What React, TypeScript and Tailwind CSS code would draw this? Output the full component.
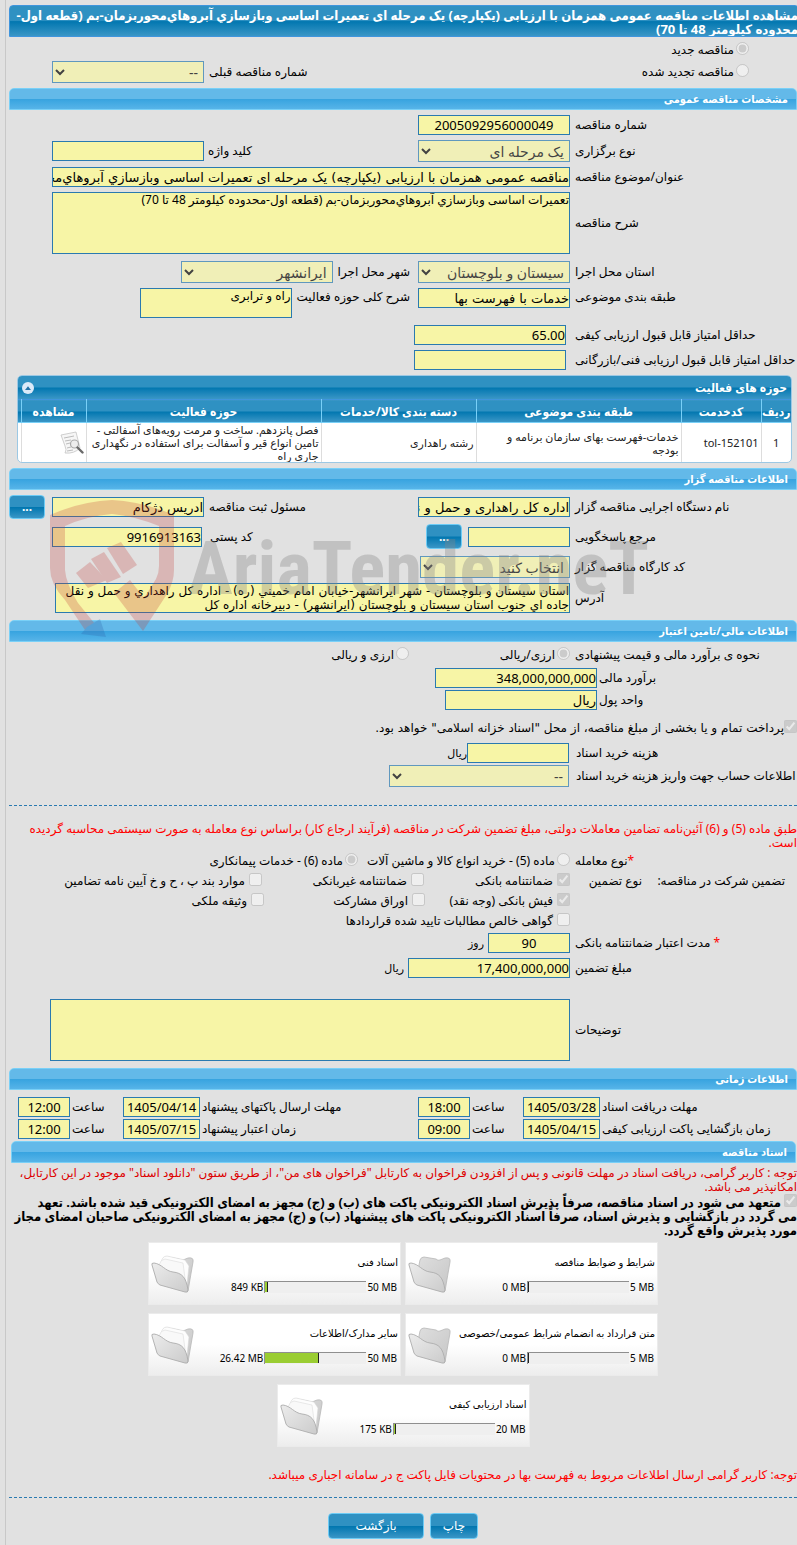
import React from "react";

const inputBase =
  "block shrink-0 rounded-none border border-[#2a7ab0] bg-[#f7f5a6] p-0 text-black text-[13px] leading-[18px] outline-none";

const boldFace = "font-['Noto_Sans','DejaVu_Sans_Condensed','DejaVu_Sans',sans-serif] font-bold";

type FieldProps = { id: string; value?: string; className?: string };

function TextBox({ id, value = "", className = "w-[152px]" }: FieldProps) {
  const face = /^[\d.,:/]*$/.test(value) ? "" : "font-['DejaVu_Sans',sans-serif]";
  return (
    <input id={id} type="text" readOnly defaultValue={value} className={`${inputBase} h-5 ${face} ${className}`} />
  );
}

function Area({ id, value = "", className = "" }: FieldProps) {
  return (
    <textarea
      id={id}
      readOnly
      defaultValue={value}
      className={`${inputBase} resize-none overflow-hidden !text-[12px] !leading-[14px] ${className}`}
    />
  );
}

function Drop({ id, value = "", className = "w-[152px]" }: FieldProps) {
  return (
    <select
      id={id}
      disabled
      defaultValue={value}
      className={`block h-[22px] shrink-0 rounded-none border border-[#2a7ab0] bg-[#f7f5a6] px-px text-[14px] text-black opacity-70 ${className}`}
    >
      <option value={value}>{value}</option>
    </select>
  );
}

function Lead({ id, children, className = "w-[222px] me-[5px]" }: { id?: string; children: React.ReactNode; className?: string }) {
  return (
    <label htmlFor={id} className={`block shrink-0 text-left whitespace-nowrap ${className}`}>
      {children}
    </label>
  );
}

function Pick({
  type,
  name,
  on = false,
  children,
  className = "",
}: {
  type: "radio" | "checkbox";
  name: string;
  on?: boolean;
  children: React.ReactNode;
  className?: string;
}) {
  return (
    <label className={`flex shrink-0 items-center whitespace-nowrap ${type === "radio" ? "gap-[2px]" : "gap-1"} ${className}`}>
      <input type={type} name={name} disabled defaultChecked={on} className="mb-1 h-[13px] w-[13px] shrink-0" />
      <span>{children}</span>
    </label>
  );
}

function Bar({ children, className = "" }: { children: React.ReactNode; className?: string }) {
  return (
    <h2
      className={`h-[22px] rounded-t-[5px] border border-[#79d0f7] bg-[linear-gradient(#63b9e9_0%,#63b9e9_48%,#38a4e0_52%,#57b4e8_100%)] px-2 text-[11px] leading-[20px] text-white ${boldFace} ${className}`}
    >
      {children}
    </h2>
  );
}

function Row({ children, className = "" }: { children: React.ReactNode; className?: string }) {
  return <div className={`flex items-center ${className}`}>{children}</div>;
}

const blueFill = "bg-[linear-gradient(#2f91c2_0%,#2f91c2_48%,#0277b0_52%,#3a96c6_100%)]";

function BlueButton({ children, className = "", label }: { children: React.ReactNode; className?: string; label?: string }) {
  return (
    <button
      type="button"
      aria-label={label}
      className={`shrink-0 rounded-[4px] border border-[#6ccbf5] text-white ${blueFill} ${className}`}
    >
      {children}
    </button>
  );
}

function Folder({ papers }: { papers: boolean }) {
  return (
    <svg viewBox="0 0 44 40" className="h-10 w-11" aria-hidden="true">
      <defs>
        <linearGradient id="folderBack" x1="0" y1="0" x2="1" y2="1">
          <stop offset="0" stopColor="#dedede" />
          <stop offset="1" stopColor="#c6c6c6" />
        </linearGradient>
        <linearGradient id="folderFront" x1="0" y1="0" x2="1" y2="1">
          <stop offset="0" stopColor="#ececec" />
          <stop offset="1" stopColor="#cbcbcb" />
        </linearGradient>
      </defs>
      <path d="M10 16L12 6Q13 3 16 3L28 5Q30 7 32 6L37 4Q43 3 42 8L37 37Q35 39 33 35Z" fill="url(#folderBack)" stroke="#b8b8b8" strokeWidth="0.8" />
      {papers && (
        <>
          <path d="M10 9Q11 2 16 2L34 6L38 12L36 31Z" fill="#fdfdfd" stroke="#d6d6d6" strokeWidth="0.6" />
          <path d="M8 11Q10 5 14 5L32 9L35 32Z" fill="#f9f9f9" stroke="#dcdcdc" strokeWidth="0.6" />
        </>
      )}
      <path d="M1 11Q0 9 3 9C11 10 14 17 22 18C31 19 35 23 37 36Q37 39 34 38L9 31Q7 30 6 28Z" fill="url(#folderFront)" stroke="#adadad" strokeWidth="0.9" />
    </svg>
  );
}

function FileCard({ title, max, used, fill, papers }: { title: string; max: string; used: string; fill: number; papers: boolean }) {
  return (
    <div className="flex h-[63px] w-[253px] items-center justify-between border border-[#ebebeb] bg-[linear-gradient(#ffffff_50%,#ededed_100%)] px-[2px]">
      <div className="flex flex-col gap-3">
        <span className="text-[10px] leading-[14px]">{title}</span>
        <div className="flex items-center text-[10px] leading-3">
          <span dir="ltr" className="px-px">{max}</span>
          <div dir="ltr" className="h-3 w-[102px] border-t border-l border-t-[#8f8f8f] border-l-[#8f8f8f] bg-[#efefef]">
            <div className="h-[10px] border-r border-[#222] bg-[#9acd32]" style={{ width: fill + 1 }} />
          </div>
          <span dir="ltr" className="px-px">{used}</span>
        </div>
      </div>
      <Folder papers={papers} />
    </div>
  );
}

function Watermark() {
  return (
    <div dir="ltr" aria-hidden="true" className="pointer-events-none absolute top-[5px] left-[41px] flex">
      <svg viewBox="0 0 126 138" className="h-[138px] w-[126px] shrink-0 opacity-25">
        <path
          d="M62 0Q91 1 124 15V70Q124 82 117 94L93 131L64 93L80 80L94 98L106 79Q109 73 109 66V26Q84 16 62 14Q37 16 15 26V70Q16 84 28 103L45 124L37 133L15 100Q0 84 0 68V15Q32 1 62 0Z"
          fill="#c23b35"
        />
        <path d="M26 73L40 62L57 80L38 88Z" fill="#c23b35" />
        <path d="M41 59L54 52L71 77L57 83Z" fill="#c23b35" />
        <path d="M57 48L71 42L87 65L73 74Z" fill="#c23b35" />
        <path d="M50 119L56 137L31 134L37 127Z" fill="#2f5fa8" />
      </svg>
      <span className="ml-[12px] pt-[16px] font-['Roboto_Condensed','Roboto',sans-serif] text-[75px] leading-[104px] font-bold text-[#888888]/35">
        AriaTender.neT
      </span>
    </div>
  );
}

const th = `border-l border-[#79d0f7] p-0 text-center text-[12px] whitespace-nowrap ${boldFace}`;
const td = "border-l border-[#dddddd] px-[2px] py-0";

function ActivityTable() {
  return (
    <div className="me-2 ms-[5px] mt-[5px] overflow-hidden rounded-[5px] border border-[#9cc8e4] bg-white">
      <div className={`flex h-[23px] items-center justify-between px-1 text-white ${blueFill}`}>
        <h3 className={`text-[12px] ${boldFace}`}>حوزه های فعالیت</h3>
        <button type="button" aria-label="بستن جدول" className="flex h-3 w-3 items-center justify-center rounded-full bg-[#dbe9f8]">
          <svg viewBox="0 0 8 5" className="h-[4px] w-[6px]" aria-hidden="true">
            <path d="M0 5L4 0L8 5Z" fill="#2272a8" />
          </svg>
        </button>
      </div>
      <table className="w-full table-fixed border-collapse text-[11px] leading-[13px] text-[#222222]">
        <colgroup>
          <col className="w-[30px]" />
          <col className="w-[80px]" />
          <col className="w-[205px]" />
          <col className="w-[155px]" />
          <col />
          <col className="w-[65px]" />
          <col className="w-[3px]" />
        </colgroup>
        <thead>
          <tr className={`h-[23px] border-y border-t-[#3f95dd] border-b-[#79d0f7] text-white ${blueFill}`}>
            <th className={th}>ردیف</th>
            <th className={th}>کدخدمت</th>
            <th className={th}>طبقه بندی موضوعی</th>
            <th className={th}>دسته بندی کالا/خدمات</th>
            <th className={th}>حوزه فعالیت</th>
            <th className={th}>مشاهده</th>
            <td />
          </tr>
        </thead>
        <tbody>
          <tr className="h-[39px]">
            <td className={`${td} text-center`}>1</td>
            <td className={td}><span dir="ltr">tol-152101</span></td>
            <td className={td}>خدمات-فهرست بهای سازمان برنامه و بودجه</td>
            <td className={td}>رشته راهداری</td>
            <td className={td}>فصل پانزدهم. ساخت و مرمت رویه‌های آسفالتی - تامین انواع قیر و آسفالت برای استفاده در نگهداری جاری راه</td>
            <td className={td}>
              <button type="button" aria-label="مشاهده" className="block">
                <svg viewBox="0 0 24 24" className="h-6 w-6" aria-hidden="true">
                  <path d="M1 4L16 1L20 17Q14 23 5 22Q7 19 5 15Z" fill="#f6f6f6" stroke="#c4c4c4" strokeWidth="0.8" />
                  <path d="M4 7L14 5M5 10L11 9M6 13L10 12M7 17L11 16M7 20L13 19" stroke="#bcbcbc" strokeWidth="1" />
                  <circle cx="14.500" cy="13" r="4" fill="#eeeeee" stroke="#aaaaaa" strokeWidth="1.200" />
                  <path d="M17.500 16.500L22.500 21.500" stroke="#6a6a6a" strokeWidth="2.400" strokeLinecap="round" />
                </svg>
              </button>
            </td>
            <td />
          </tr>
        </tbody>
      </table>
    </div>
  );
}

function DateTime({ id, label, date, time, className }: { id: string; label: string; date: string; time: string; className: string }) {
  return (
    <div className="flex items-center">
      <Lead id={`${id}-date`} className={`me-[2px] ${className}`}>{label}</Lead>
      <TextBox id={`${id}-date`} value={date} className="w-[77px] text-center" />
      <Lead id={`${id}-time`} className="w-[51px] me-[2px]">ساعت</Lead>
      <TextBox id={`${id}-time`} value={time} className="w-[52px] text-center" />
    </div>
  );
}

export default function App() {
  return (
    <div
      dir="rtl"
      lang="fa"
      className="min-h-screen overflow-hidden bg-[#e1e1e1] pl-[5px] font-['Noto_Sans','DejaVu_Sans',sans-serif] text-[12px] leading-[14px] text-black"
    >
      <main className="min-h-screen border-l border-[#c8c8c8] pt-[5px] pb-[5px] pl-[3px]">
        <h1
          className={`-ms-[2px] h-8 overflow-hidden rounded-t-[4px] border border-[#3f95dd] pt-[2px] text-[13px] leading-[14px] whitespace-nowrap text-white ${boldFace} ${blueFill}`}
        >
          مشاهده اطلاعات مناقصه عمومی همزمان با ارزیابی (یکپارچه) یک مرحله ای تعمیرات اساسی وبازسازي آبروهاي‌محوربزمان-بم (قطعه اول-
          <br />
          محدوده کیلومتر 48 تا 70)
        </h1>

        <Row className="mt-[3px] h-5 ps-12">
          <Pick type="radio" name="kind" on>مناقصه جدید</Pick>
        </Row>
        <Row className="mt-px h-[22px]">
          <Pick type="radio" name="kind" className="w-[379px] ps-12">مناقصه تجدید شده</Pick>
          <Lead id="prev" className="w-[209px] me-[5px]">شماره مناقصه قبلی</Lead>
          <Drop id="prev" value="--" />
        </Row>

        <Bar className="mt-[5px]">مشخصات مناقصه عمومی</Bar>
        <Row className="mt-[5px]">
          <Lead id="no">شماره مناقصه</Lead>
          <TextBox id="no" value="2005092956000049" className="w-[152px] text-center" />
        </Row>
        <Row className="mt-[5px]">
          <Lead id="how">نوع برگزاری</Lead>
          <Drop id="how" value="یک مرحله ای" />
          <Lead id="key" className="w-[210px] me-1">کلید واژه</Lead>
          <TextBox id="key" />
        </Row>
        <Row className="mt-[5px]">
          <Lead id="subject">عنوان/موضوع مناقصه</Lead>
          <TextBox
            id="subject"
            value="مناقصه عمومی همزمان با ارزیابی (یکپارچه) یک مرحله ای تعمیرات اساسی وبازسازي آبروهاي‌محوربزمان-بم (قطعه اول-محدوده کیلومتر 48 تا 70)"
            className="w-[518px]"
          />
        </Row>
        <Row className="mt-[5px]">
          <Lead id="about">شرح مناقصه</Lead>
          <Area id="about" value="تعمیرات اساسی وبازسازي آبروهاي‌محوربزمان-بم (قطعه اول-محدوده کیلومتر 48 تا 70)" className="h-[62px] w-[518px]" />
        </Row>
        <Row className="mt-[7px]">
          <Lead id="province">استان محل اجرا</Lead>
          <Drop id="province" value="سیستان و بلوچستان" />
          <Lead id="city" className="ms-2 me-[5px]">شهر محل اجرا</Lead>
          <Drop id="city" value="ایرانشهر" />
        </Row>
        <Row className="mt-[5px] !items-start">
          <Lead id="category" className="w-[222px] me-[5px] pt-[2px]">طبقه بندی موضوعی</Lead>
          <TextBox id="category" value="خدمات با فهرست بها" />
          <Lead id="activity" className="ms-2 me-[5px] pt-[2px]">شرح کلی حوزه فعالیت</Lead>
          <Area id="activity" value="راه و ترابری" className="h-[30px] w-[152px]" />
        </Row>
        <Row className="mt-[7px]">
          <Lead id="min-quality" className="w-[222px] me-[9px]">حداقل امتیاز قابل قبول ارزیابی کیفی</Lead>
          <TextBox id="min-quality" value="65.00" />
        </Row>
        <Row className="mt-[5px]">
          <Lead id="min-tech" className="w-[222px] me-[9px]">حداقل امتیاز قابل قبول ارزیابی فنی/بازرگانی</Lead>
          <TextBox id="min-tech" />
        </Row>

        <ActivityTable />

        <Bar className="mt-[5px]">اطلاعات مناقصه گزار</Bar>
        <section className="relative">
          <Row className="mt-[5px]">
            <Lead id="org">نام دستگاه اجرایی مناقصه گزار</Lead>
            <TextBox id="org" value="اداره کل راهداری و حمل و نقل جاده ای جنوب" />
            <Lead id="clerk" className="w-[209px] me-[5px]">مسئول ثبت مناقصه</Lead>
            <TextBox id="clerk" value="ادریس دژکام" />
            <BlueButton label="انتخاب مسئول" className="ms-[7px] h-6 w-9 font-bold">...</BlueButton>
          </Row>
          <Row className="mt-[5px]">
            <Lead id="contact">مرجع پاسخگویی</Lead>
            <TextBox id="contact" className="w-[102px]" />
            <BlueButton label="انتخاب مرجع" className="ms-[6px] h-[25px] w-9 font-bold">...</BlueButton>
            <Lead id="zip" className="w-[216px] me-2">کد پستی</Lead>
            <TextBox id="zip" value="9916913163" className="w-[150px]" />
          </Row>
          <Row className="mt-[7px]">
            <Lead id="workshop">کد کارگاه مناقصه گزار</Lead>
            <Drop id="workshop" value="انتخاب کنید" className="w-[150px]" />
          </Row>
          <Row className="mt-[5px]">
            <Lead id="address">آدرس</Lead>
            <Area
              id="address"
              value="استان سیستان و بلوچستان - شهر ایرانشهر-خیابان امام خمیني (ره) - اداره کل راهداري و حمل و نقل جاده اي جنوب استان سیستان و بلوچستان (ایرانشهر) - دبیرخانه اداره کل"
              className="h-[30px] w-[515px] font-['DejaVu_Sans',sans-serif]"
            />
          </Row>
          <Watermark />
        </section>

        <Bar className="mt-[7px]">اطلاعات مالی/تامین اعتبار</Bar>
        <Row className="mt-[3px] h-5">
          <span className="w-[222px] me-[5px] shrink-0 text-left">نحوه ی برآورد مالی و قیمت پیشنهادی</span>
          <Pick type="radio" name="currency" on className="w-[161px]">ارزی/ریالی</Pick>
          <Pick type="radio" name="currency">ارزی و ریالی</Pick>
        </Row>
        <Row className="mt-[3px]">
          <Lead id="estimate" className="w-[198px] me-[2px]">برآورد مالی</Lead>
          <TextBox id="estimate" value="348,000,000,000" className="w-[162px]" />
        </Row>
        <Row className="mt-[2px]">
          <Lead id="unit" className="w-[198px] me-[2px]">واحد پول</Lead>
          <TextBox id="unit" value="ریال" />
        </Row>
        <Row className="mt-[8px] h-5 font-['DejaVu_Sans',sans-serif]">
          <Pick type="checkbox" name="treasury" on className="!gap-0">
            پرداخت تمام و یا بخشی از مبلغ مناقصه، از محل "اسناد خزانه اسلامی" خواهد بود.
          </Pick>
        </Row>
        <Row className="mt-[5px]">
          <Lead id="fee" className="w-[221px] me-[7px]">هزینه خرید اسناد</Lead>
          <TextBox id="fee" className="w-[102px]" />
          <span className="text-[11px]">ریال</span>
        </Row>
        <Row className="mt-[2px]">
          <Lead id="account" className="w-[221px] me-[7px]">اطلاعات حساب جهت واریز هزینه خرید اسناد</Lead>
          <Drop id="account" value="--" className="w-[180px]" />
        </Row>

        <hr className="mt-[18px] border-t border-dashed border-[#2a7ab0]" />

        <p className="mt-4 text-[#ff0000]">
          طبق ماده (5) و (6) آئین‌نامه تضامین معاملات دولتی، مبلغ تضمین شرکت در مناقصه (فرآیند ارجاع کار) براساس نوع معامله به صورت سیستمی محاسبه گردیده است.
        </p>
        <Row className="mt-px h-5">
          <span className="w-[222px] me-[5px] shrink-0 text-left"><span className="text-[#ff0000]">*</span>نوع معامله</span>
          <Pick type="radio" name="deal" className="w-[212px]">ماده (5) - خرید انواع کالا و ماشین آلات</Pick>
          <Pick type="radio" name="deal" on>ماده (6) - خدمات پیمانکاری</Pick>
        </Row>
        <div className="flex">
          <div className="flex h-5 w-[227px] shrink-0 items-center ps-3">
            <span className="w-[143px] shrink-0">تضمین شرکت در مناقصه:</span>
            <span>نوع تضمین</span>
          </div>
          <div>
            <Row className="h-5">
              <Pick type="checkbox" name="g1" on className="w-[146px]">ضمانتنامه بانکی</Pick>
              <Pick type="checkbox" name="g2" className="w-[162px]">ضمانتنامه غیربانکی</Pick>
              <Pick type="checkbox" name="g3">موارد بند پ ، ح و خ آیین نامه تضامین</Pick>
            </Row>
            <Row className="h-5">
              <Pick type="checkbox" name="g4" on className="w-[145px]">فیش بانکی (وجه نقد)</Pick>
              <Pick type="checkbox" name="g5" className="w-[161px]">اوراق مشارکت</Pick>
              <Pick type="checkbox" name="g6">وثیقه ملکی</Pick>
            </Row>
            <Row className="h-5">
              <Pick type="checkbox" name="g7">گواهی خالص مطالبات تایید شده قراردادها</Pick>
            </Row>
          </div>
        </div>
        <Row className="mt-[2px]">
          <Lead id="validity"><span className="text-[#ff0000]">*</span> مدت اعتبار ضمانتنامه بانکی</Lead>
          <TextBox id="validity" value="90" className="w-[82px] text-center" />
          <span className="ms-1 text-[11px]">روز</span>
        </Row>
        <Row className="mt-[5px]">
          <Lead id="amount">مبلغ تضمین</Lead>
          <TextBox id="amount" value="17,400,000,000" className="w-[162px]" />
          <span className="ms-1 text-[11px]">ریال</span>
        </Row>
        <Row className="mt-[21px]">
          <Lead id="notes">توضیحات</Lead>
          <Area id="notes" className="h-[62px] w-[520px]" />
        </Row>

        <Bar className="mt-[7px]">اطلاعات زمانی</Bar>
        <Row className="mt-[7px]">
          <DateTime id="docs" label="مهلت دریافت اسناد" date="1405/03/28" time="18:00" className="w-[195px]" />
          <DateTime id="send" label="مهلت ارسال پاکتهای پیشنهاد" date="1405/04/14" time="12:00" className="w-[216px]" />
        </Row>
        <Row className="mt-[2px]">
          <DateTime id="open" label="زمان بازگشایی پاکت ارزیابی کیفی" date="1405/04/15" time="09:00" className="w-[195px]" />
          <DateTime id="valid" label="زمان اعتبار پیشنهاد" date="1405/07/15" time="12:00" className="w-[216px]" />
        </Row>

        <Bar className="mt-[2px] ms-px me-[2px]">اسناد مناقصه</Bar>
        <p className="mt-[3px] text-[#dd0000]">
          توجه : کاربر گرامی، دریافت اسناد در مهلت قانونی و پس از افزودن فراخوان به کارتابل "فراخوان های من"، از طریق ستون "دانلود اسناد" موجود در این کارتابل، امکانپذیر می باشد.
        </p>
        <label className={`block text-[13px] whitespace-nowrap ${boldFace}`}>
          <input type="checkbox" name="commit" disabled defaultChecked className="me-[3px] h-[13px] w-[13px]" />
          متعهد می شود در اسناد مناقصه، صرفاً پذیرش اسناد الکترونیکی پاکت های (ب) و (ج) مجهز به امضای الکترونیکی قید شده باشد. تعهد
          <br />
          می گردد در بازگشایی و پذیرش اسناد، صرفاً اسناد الکترونیکی پاکت های پیشنهاد (ب) و (ج) مجهز به امضای الکترونیکی صاحبان امضای مجاز
          <br />
          مورد پذیرش واقع گردد.
        </label>

        <div className="mx-auto mt-[5px] flex max-w-[520px] flex-wrap justify-center gap-x-1 gap-y-2">
          <FileCard title="شرایط و ضوابط مناقصه" max="5 MB" used="0 MB" fill={0} papers={false} />
          <FileCard title="اسناد فنی" max="50 MB" used="849 KB" fill={2} papers />
          <FileCard title="متن قرارداد به انضمام شرایط عمومی/خصوصی" max="5 MB" used="0 MB" fill={0} papers={false} />
          <FileCard title="سایر مدارک/اطلاعات" max="50 MB" used="26.42 MB" fill={53} papers />
          <FileCard title="اسناد ارزیابی کیفی" max="20 MB" used="175 KB" fill={1} papers />
        </div>

        <p className="mt-[21px] text-[#ff0000]">
          توجه: کاربر گرامی ارسال اطلاعات مربوط به فهرست بها در محتویات فایل پاکت ج در سامانه اجباری میباشد.
        </p>
        <hr className="mt-[15px] border-t border-dashed border-[#2a7ab0]" />
        <div className="mt-[15px] flex justify-center gap-[6px]">
          <BlueButton className="h-[26px] w-12">چاپ</BlueButton>
          <BlueButton className="h-[26px] w-24">بازگشت</BlueButton>
        </div>
      </main>
    </div>
  );
}
